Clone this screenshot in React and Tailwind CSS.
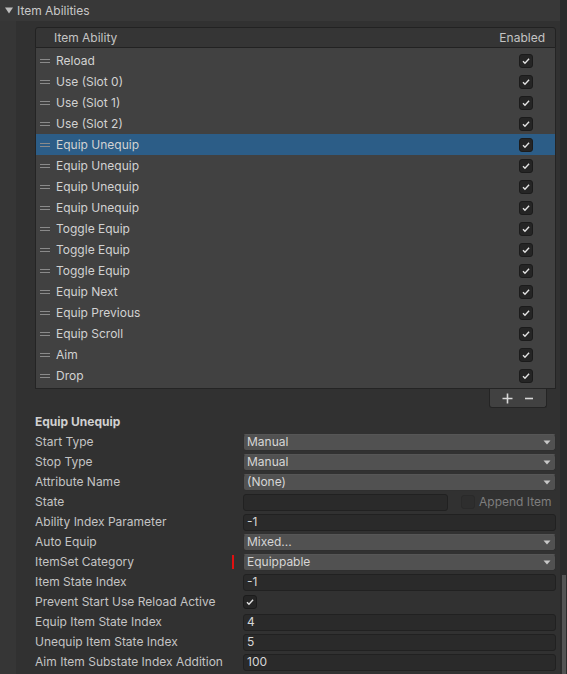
import React from 'react';

const abilities = [
  'Reload',
  'Use (Slot 0)',
  'Use (Slot 1)',
  'Use (Slot 2)',
  'Equip Unequip',
  'Equip Unequip',
  'Equip Unequip',
  'Equip Unequip',
  'Toggle Equip',
  'Toggle Equip',
  'Toggle Equip',
  'Equip Next',
  'Equip Previous',
  'Equip Scroll',
  'Aim',
  'Drop',
];

function Check({ className = '' }) {
  return (
    <svg viewBox="0 0 14 14" className={className}>
      <path d="M3.5 7.2 L5.8 9.5 L10.6 4.4" fill="none" stroke="#e4e4e4" strokeWidth="1.6" />
    </svg>
  );
}

function CheckBox({ checked = true, disabled = false }) {
  return (
    <div
      className={`h-[14px] w-[14px] rounded-[3px] border ${
        disabled ? 'border-[#2a2a2a] bg-[#2e2e2e]' : 'border-[#1b1b1b] bg-[#252525]'
      }`}
    >
      {checked && <Check className="h-full w-full" />}
    </div>
  );
}

function Handle() {
  return (
    <div className="flex w-[10px] flex-col gap-[2px]">
      <div className="h-px bg-[#8a8a8a]" />
      <div className="h-px bg-[#8a8a8a]" />
    </div>
  );
}

function Dropdown({ value }) {
  return (
    <div className="flex h-[17px] flex-1 items-center justify-between rounded-[3px] border border-[#2f2f2f] border-t-[#565656] bg-[#515151] pl-[3px] pr-[4px] text-[#d6d6d6]">
      <span>{value}</span>
      <svg viewBox="0 0 8 5" className="h-[5px] w-[8px]">
        <path d="M0.5 0.5 H7.5 L4 4.5 Z" fill="#c8c8c8" />
      </svg>
    </div>
  );
}

function TextField({ value = '', className = 'flex-1' }) {
  return (
    <div className={`flex h-[17px] items-center rounded-[3px] border border-[#212121] bg-[#2a2a2a] pl-[3px] text-[#d6d6d6] ${className}`}>
      {value}
    </div>
  );
}

function Prop({ label, children, marker = false }) {
  return (
    <div className="flex h-[20px] items-center">
      <div className="w-[196px] shrink-0 text-[#c4c4c4]">{label}</div>
      <div className="flex w-[12px] shrink-0 justify-start pl-[1px]">
        {marker && <div className="h-[14px] w-[2px] bg-[#e01010]" />}
      </div>
      <div className="flex flex-1 items-center">{children}</div>
    </div>
  );
}

export default function App() {
  return (
    <div className="flex h-[674px] w-[567px] overflow-hidden bg-[#383838] font-['Inter','Liberation_Sans',sans-serif] text-[12px] leading-none">
      <div className="flex min-w-0 flex-1 flex-col">
        <div className="flex h-[21px] shrink-0 items-center text-[#c8c8c8]">
          <svg viewBox="0 0 8 7" className="ml-[5px] mr-[4px] h-[7px] w-[8px]">
            <path d="M0 0.5 H8 L4 6.5 Z" fill="#bdbdbd" />
          </svg>
          <span>Item Abilities</span>
        </div>

        <div className="flex flex-1">
          <div className="w-[16px] shrink-0 bg-[#363636]" />
          <div className="flex-1 bg-[#313131] pl-[19px] pr-[4px] pt-[6px]">
            {/* list header */}
            <div className="flex h-[21px] items-center justify-between rounded-t-[3px] border border-[#222222] bg-[#353535] pl-[18px] pr-[10px] text-[#c4c4c4]">
              <span>Item Ability</span>
              <span>Enabled</span>
            </div>
            {/* list body */}
            <div className="border-x border-b border-[#242424] bg-[#414141] py-[2px]">
              {abilities.map((name, i) => (
                <div
                  key={i}
                  className={`flex h-[21px] items-center pl-[4px] pr-[22px] ${i === 4 ? 'bg-[#2c5d87]' : ''}`}
                >
                  <Handle />
                  <span className="ml-[6px] flex-1 text-[#d2d2d2]">{name}</span>
                  <CheckBox />
                </div>
              ))}
            </div>
            {/* footer */}
            <div className="flex justify-end pr-[9px]">
              <div className="flex h-[19px] w-[58px] items-center justify-around rounded-b-[3px] border-x border-b border-[#242424] bg-[#414141] px-[6px]">
                <svg viewBox="0 0 11 11" className="h-[11px] w-[11px]">
                  <path d="M5.5 0.5 V10.5 M0.5 5.5 H10.5" stroke="#d8d8d8" strokeWidth="1.6" />
                </svg>
                <svg viewBox="0 0 10 11" className="h-[11px] w-[10px]">
                  <path d="M1 5.5 H9" stroke="#d8d8d8" strokeWidth="1.6" />
                </svg>
              </div>
            </div>

            <div className="mt-[3px] flex h-[21px] items-center font-bold text-[#d0d0d0]">Equip Unequip</div>
            <Prop label="Start Type"><Dropdown value="Manual" /></Prop>
            <Prop label="Stop Type"><Dropdown value="Manual" /></Prop>
            <Prop label="Attribute Name"><Dropdown value="(None)" /></Prop>
            <Prop label="State">
              <TextField className="w-[205px]" />
              <div className="ml-[13px]"><CheckBox checked={false} disabled /></div>
              <span className="ml-[4px] text-[#7e7e7e]">Append Item</span>
            </Prop>
            <Prop label="Ability Index Parameter"><TextField value="-1" /></Prop>
            <Prop label="Auto Equip"><Dropdown value="Mixed..." /></Prop>
            <Prop label="ItemSet Category" marker><Dropdown value="Equippable" /></Prop>
            <Prop label="Item State Index"><TextField value="-1" /></Prop>
            <Prop label="Prevent Start Use Reload Active"><CheckBox /></Prop>
            <Prop label="Equip Item State Index"><TextField value="4" /></Prop>
            <Prop label="Unequip Item State Index"><TextField value="5" /></Prop>
            <Prop label="Aim Item Substate Index Addition"><TextField value="100" /></Prop>
          </div>
        </div>
      </div>
      {/* scrollbar */}
      <div className="flex w-[7px] shrink-0 flex-col bg-[#2b2b2b] pl-[2px]">
        <div className="flex-1" />
        <div className="h-[99px] w-[4px] bg-[#545454]" />
      </div>
    </div>
  );
}
